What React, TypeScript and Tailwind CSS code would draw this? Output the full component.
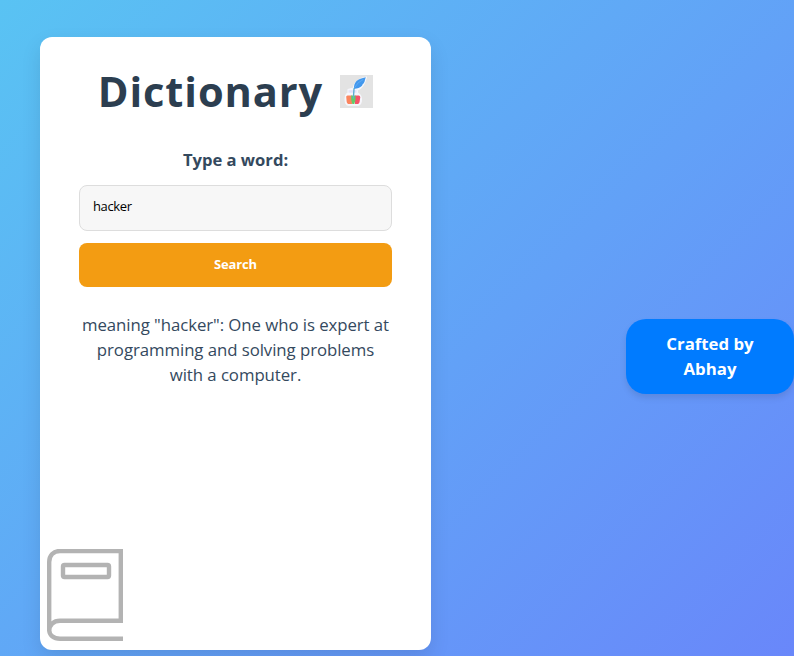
function QuillIcon() {
  return (
    <svg width="33" height="33" viewBox="0 0 33 33" fill="none">
      <path d="M26.5 2 C20 3 14 7 13.5 13 L8 14.5 V18 C5 19.5 4.7 23 5.3 27 Q6 30 8 30.2 H18.5 Q20.5 30 21.2 27 C22 23 21 19.5 17.5 18 V15 C23 13 25 8 26.5 2Z" fill="#f6f7fc" stroke="#f6f7fc" strokeWidth="1.1" strokeLinejoin="round" />
      <path d="M8.5 15.2h8v2.5h-8z" fill="#e3e2fa" />
      <path d="M7.5 20.5H12v8.4H8.2Q7 28.6 6.7 27L6.2 21.8Q6.3 20.7 7.5 20.5Z" fill="#fb855f" />
      <path d="M15 20.5h3.8Q20.3 20.8 20.2 22.2L19.6 27Q19.3 28.6 18 28.9H15Z" fill="#f65368" />
      <path d="M11.2 20.5h4.3V25l-1.2 4h-2l-1.1-4Z" fill="#63cc69" />
      <path d="M13.4 23 14 14 16 10" stroke="#5fafd1" strokeWidth="1.4" strokeLinecap="round" />
      <path d="M14.3 13.8C13.1 7.2 17.8 3.6 25.8 2.2C24.8 4.8 25 6.6 23.7 8.2L22.5 9.4L22 10.8C20 12.8 17.5 13.8 14.3 13.8Z" fill="#4298ed" />
      <path d="m14.7 12.5 3.6-4.8 4.9-3.1" stroke="#68b0f5" strokeWidth="0.7" />
    </svg>
  );
}

function BookIcon() {
  return (
    <svg width="76" height="93" viewBox="0 0 76 93" fill="none" stroke="#b3b3b3" strokeWidth="4.4">
      <path d="M76 89.8H13C6.5 89.8 2.2 86 2.2 81V13C2.2 6.5 6.5 2 13 2H73.8V71.8H13C6.5 71.8 2.2 76 2.2 82" />
      <rect x="16" y="16" width="46" height="12" rx="1.5" />
    </svg>
  );
}

export default function App() {
  return (
    <main className="flex h-[656px] w-[794px] items-start justify-between overflow-hidden bg-linear-[135deg,#59c3f3_0%,#6987fa_100%] font-['Open_Sans',sans-serif] text-[#2c3e50]">
      <section className="mt-[37px] ml-10 flex h-[613px] w-[391px] flex-col items-center rounded-xl bg-white px-[39px] pt-6 pb-2 shadow-[0_8px_20px_rgba(0,0,0,0.1)]">
        <h1 className="flex h-[60px] items-center text-[41.6px] font-bold tracking-[0.9px]">
          Dictionary
          <span className="ml-[17px] h-[33px] w-[33px] bg-[#e3e3e3]">
            <QuillIcon />
          </span>
        </h1>
        <label htmlFor="word" className="mt-[26px] text-[16.6px] leading-[25px] font-bold text-[#34495e]">Type a word:</label>
        <input id="word" className="mt-[13px] h-[46px] w-full rounded-lg border border-[#ddd] bg-[#f7f7f7] px-[13px] pb-1 text-[13px] tracking-[-0.35px] text-black outline-none" defaultValue="hacker" />
        <button className="mt-3 h-11 w-full rounded-lg bg-[#f39c12] text-[13px] font-bold tracking-[-0.15px] text-white">Search</button>
        <p className="mt-[25px] w-full text-center text-[16.8px] leading-[25px] tracking-[-0.06px] text-[#34495e]">meaning "hacker": One who is expert at programming and solving problems with a computer.</p>
        <div className="mt-auto -ml-8 self-start">
          <BookIcon />
        </div>
      </section>
      <aside className="mt-[319px] h-[75px] w-[168px] rounded-[20px] bg-[#007bff] px-5 pt-3 text-center text-[16.8px] leading-[25px] font-bold text-white shadow-[0_4px_6px_rgba(0,0,0,0.1)]">Crafted by Abhay</aside>
    </main>
  );
}
